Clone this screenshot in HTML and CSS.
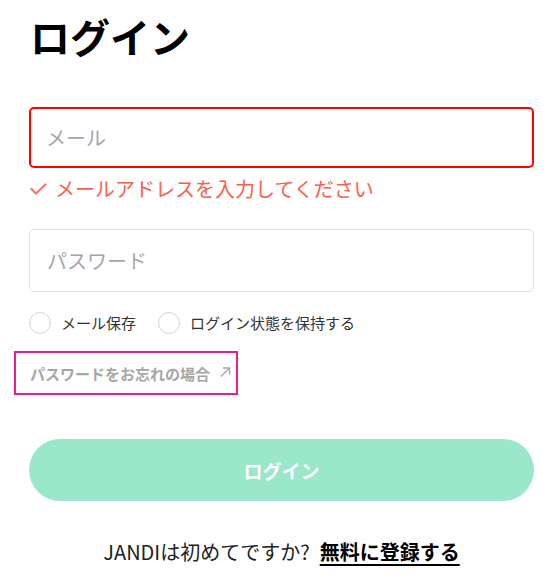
FILE: index.html
```html
<!DOCTYPE html>
<html lang="ja">
<head>
<meta charset="utf-8">
<link rel="stylesheet" href="styles.css">
</head>
<body>
<main class="login">
  <h1 class="title">ログイン</h1>
  <div class="field field-error">
    <input class="input" type="text" placeholder="メール">
  </div>
  <p class="error">
    <svg class="check" width="17" height="12" viewBox="0 0 17 12"><path d="M1.5 6 L6 10.5 L15.5 1.5" fill="none" stroke="#f5766b" stroke-width="2.2" stroke-linecap="round" stroke-linejoin="round"/></svg>
    <span>メールアドレスを入力してください</span>
  </p>
  <div class="field">
    <input class="input" type="password" placeholder="パスワード">
  </div>
  <div class="options">
    <label class="opt"><span class="circle"></span>メール保存</label>
    <label class="opt"><span class="circle"></span>ログイン状態を保持する</label>
  </div>
  <a class="forgot" href="#">パスワードをお忘れの場合
    <svg class="arrow" width="12" height="12" viewBox="0 0 12 12"><path d="M2 10.5 L10.5 2 M4 2 H10.5 V8.5" fill="none" stroke="#aaa" stroke-width="1.4"/></svg>
  </a>
  <button class="submit" type="button">ログイン</button>
  <p class="signup">JANDIは初めてですか?<a class="signup-link" href="#">無料に登録する</a></p>
</main>
</body>
</html>
```
FILE: styles.css
```css
html, body {
  margin: 0;
  padding: 0;
  background: #fff;
}
body {
  font-family: "Noto Sans CJK JP", "Noto Sans", sans-serif;
  color: #222;
}
.login {
  width: 505px;
  padding: 10px 0 0 29px;
  display: flex;
  flex-direction: column;
}
.title {
  margin: 0;
  font-size: 40px;
  font-weight: 700;
  line-height: 52px;
  color: #000;
  padding-left: 1px;
}
.field {
  margin-top: 45px;
}
.input {
  box-sizing: border-box;
  width: 505px;
  height: 63px;
  border: 1px solid #e1e3ea;
  border-radius: 5px;
  padding: 0 17px;
  font-family: inherit;
  font-size: 20px;
  outline: none;
  background: #fff;
}
.input::placeholder {
  color: #a3a6ad;
}
.field-error .input {
  height: 61px;
  padding: 0 15px;
  border: 2px solid #ff0000;
}
.error {
  margin: 7px 0 0 1px;
  display: flex;
  align-items: center;
  gap: 8px;
  font-size: 20px;
  line-height: 28px;
  color: #ff5d4b;
}
.error + .field {
  margin-top: 26px;
}
.options {
  display: flex;
  gap: 22px;
  margin-top: 20px;
}
.opt {
  display: flex;
  align-items: center;
  gap: 10px;
  font-size: 15px;
  line-height: 22px;
  color: #333;
}
.circle {
  box-sizing: border-box;
  width: 22px;
  height: 22px;
  border: 1px solid #d3d5db;
  border-radius: 50%;
}
.forgot {
  align-self: flex-start;
  box-sizing: border-box;
  margin: 17px 0 0 -15px;
  width: 224px;
  height: 44px;
  border: 2px solid #ec1c8e;
  padding: 0 0 0 14px;
  display: flex;
  align-items: center;
  gap: 9px;
  font-size: 15px;
  font-weight: 700;
  color: #a6a6a6;
  text-decoration: none;
}
.arrow {
  margin-top: -2px;
}
.submit {
  margin-top: 44px;
  width: 505px;
  height: 62px;
  border: none;
  border-radius: 31px;
  background: #9ae7c9;
  color: #fff;
  font-family: inherit;
  font-size: 19px;
  font-weight: 700;
}
.signup {
  margin: 37px 0 0;
  text-align: center;
  font-size: 20px;
  line-height: 28px;
  color: #222;
}
.signup-link {
  margin-left: 10px;
  color: #000;
  font-weight: 700;
  text-decoration: underline;
  text-underline-offset: 4px;
  text-decoration-thickness: 2px;
}
```
